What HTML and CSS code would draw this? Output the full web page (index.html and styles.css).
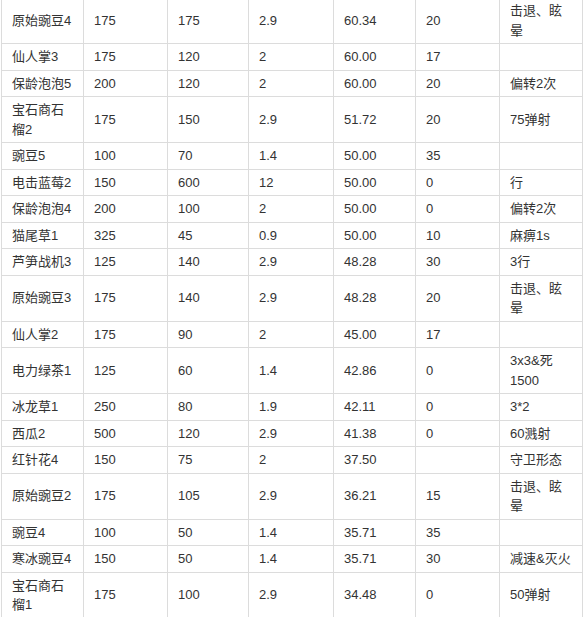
FILE: index.html
```html
<!DOCTYPE html>
<html lang="zh-CN">
<head>
<meta charset="utf-8">
<link rel="stylesheet" href="styles.css">
</head>
<body>
<div class="wrap">
<table class="data">
<colgroup>
<col class="c1"><col class="c2"><col class="c3"><col class="c4"><col class="c5"><col class="c6"><col class="c7">
</colgroup>
<tbody>
<tr><td>原始豌豆4</td><td>175</td><td>175</td><td>2.9</td><td>60.34</td><td>20</td><td>击退、眩晕</td></tr>
<tr><td>仙人掌3</td><td>175</td><td>120</td><td>2</td><td>60.00</td><td>17</td><td></td></tr>
<tr><td>保龄泡泡5</td><td>200</td><td>120</td><td>2</td><td>60.00</td><td>20</td><td>偏转2次</td></tr>
<tr><td>宝石商石榴2</td><td>175</td><td>150</td><td>2.9</td><td>51.72</td><td>20</td><td>75弹射</td></tr>
<tr><td>豌豆5</td><td>100</td><td>70</td><td>1.4</td><td>50.00</td><td>35</td><td></td></tr>
<tr><td>电击蓝莓2</td><td>150</td><td>600</td><td>12</td><td>50.00</td><td>0</td><td>行</td></tr>
<tr><td>保龄泡泡4</td><td>200</td><td>100</td><td>2</td><td>50.00</td><td>0</td><td>偏转2次</td></tr>
<tr><td>猫尾草1</td><td>325</td><td>45</td><td>0.9</td><td>50.00</td><td>10</td><td>麻痹1s</td></tr>
<tr><td>芦笋战机3</td><td>125</td><td>140</td><td>2.9</td><td>48.28</td><td>30</td><td>3行</td></tr>
<tr><td>原始豌豆3</td><td>175</td><td>140</td><td>2.9</td><td>48.28</td><td>20</td><td>击退、眩晕</td></tr>
<tr><td>仙人掌2</td><td>175</td><td>90</td><td>2</td><td>45.00</td><td>17</td><td></td></tr>
<tr><td>电力绿茶1</td><td>125</td><td>60</td><td>1.4</td><td>42.86</td><td>0</td><td>3x3&amp;死1500</td></tr>
<tr><td>冰龙草1</td><td>250</td><td>80</td><td>1.9</td><td>42.11</td><td>0</td><td>3*2</td></tr>
<tr><td>西瓜2</td><td>500</td><td>120</td><td>2.9</td><td>41.38</td><td>0</td><td>60溅射</td></tr>
<tr><td>红针花4</td><td>150</td><td>75</td><td>2</td><td>37.50</td><td></td><td>守卫形态</td></tr>
<tr><td>原始豌豆2</td><td>175</td><td>105</td><td>2.9</td><td>36.21</td><td>15</td><td>击退、眩晕</td></tr>
<tr><td>豌豆4</td><td>100</td><td>50</td><td>1.4</td><td>35.71</td><td>35</td><td></td></tr>
<tr><td>寒冰豌豆4</td><td>150</td><td>50</td><td>1.4</td><td>35.71</td><td>30</td><td>减速&amp;灭火</td></tr>
<tr><td>宝石商石榴1</td><td>175</td><td>100</td><td>2.9</td><td>34.48</td><td>0</td><td>50弹射</td></tr>
</tbody>
</table>
</div>
</body>
</html>
```
FILE: styles.css
```css
html, body {
  margin: 0;
  padding: 0;
  background: #fff;
}
.wrap {
  padding-left: 1px;
  margin-top: -3px;
}
.data {
  border-collapse: collapse;
  table-layout: fixed;
  width: 581px;
  font-family: "Liberation Sans", "Noto Sans CJK SC", sans-serif;
  font-size: 13px;
  color: #333;
}
.data td {
  border: 1px solid #dcdcdc;
  padding: 3px 10px;
  line-height: 19.5px;
  vertical-align: middle;
  text-align: left;
  word-break: normal;
}
.c1 { width: 82px; }
.c2 { width: 84px; }
.c3 { width: 81px; }
.c4 { width: 85px; }
.c5 { width: 82px; }
.c6 { width: 84px; }
.c7 { width: 83px; }
```
